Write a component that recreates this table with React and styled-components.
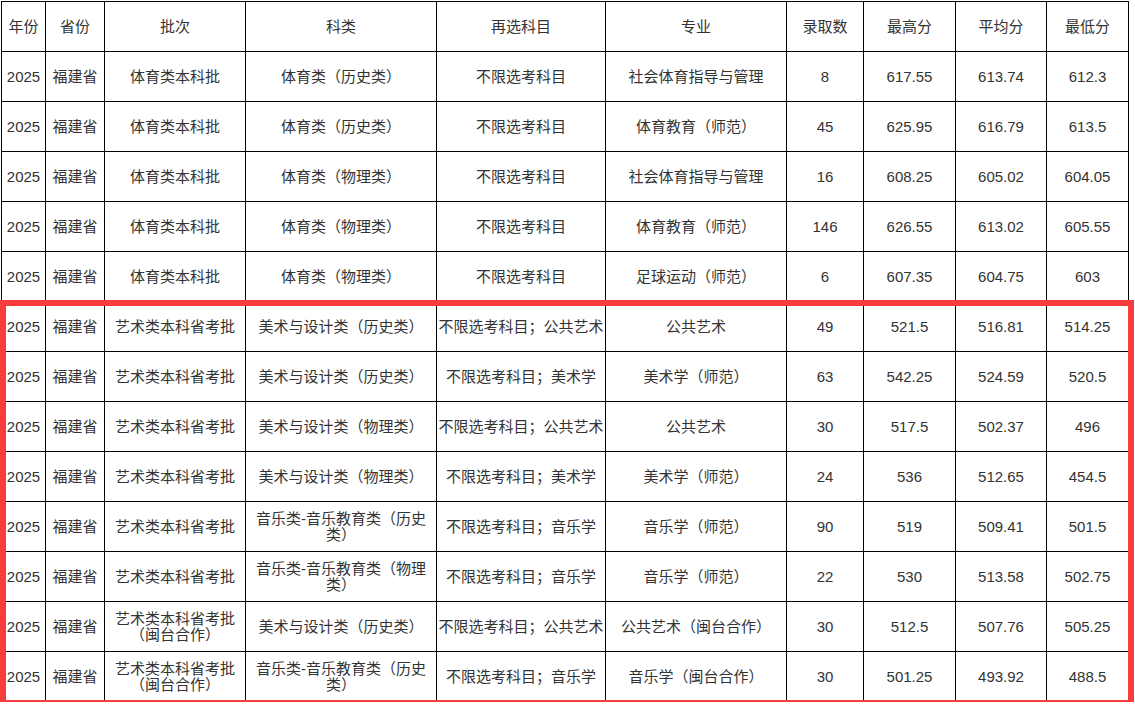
import React from "react";
import styled, { createGlobalStyle } from "styled-components";

const GlobalStyle = createGlobalStyle`
  html, body {
    margin: 0;
    padding: 0;
    background: #fff;
  }
`;

const Page = styled.div`
  position: relative;
  padding: 1px 0 0 1px;
  font-family: "Liberation Sans", "Noto Sans CJK SC", sans-serif;
  font-size: 15px;
  color: #333;
`;

const Table = styled.table`
  width: 1128px;
  border-collapse: collapse;
  table-layout: fixed;
`;

const Row = styled.tr`
  height: 50px;
`;

const Cell = styled.td`
  border: 1px solid #000;
  padding: 0 1px;
  text-align: center;
  vertical-align: middle;
  line-height: 16px;
  font-weight: normal;
`;

const HeadCell = styled(Cell).attrs({ as: "th" })``;

const Highlight = styled.div`
  position: absolute;
  left: 0;
  top: ${(p) => p.$top}px;
  width: 1134px;
  height: ${(p) => p.$height}px;
  box-sizing: border-box;
  border: 6px solid #f73c3c;
  pointer-events: none;
`;

const widths = [44, 59, 141, 191, 169, 181, 77, 92, 91, 82];

const headers = ["年份", "省份", "批次", "科类", "再选科目", "专业", "录取数", "最高分", "平均分", "最低分"];

const rows = [
  ["体育类本科批", "体育类（历史类）", "不限选考科目", "社会体育指导与管理", "8", "617.55", "613.74", "612.3"],
  ["体育类本科批", "体育类（历史类）", "不限选考科目", "体育教育（师范）", "45", "625.95", "616.79", "613.5"],
  ["体育类本科批", "体育类（物理类）", "不限选考科目", "社会体育指导与管理", "16", "608.25", "605.02", "604.05"],
  ["体育类本科批", "体育类（物理类）", "不限选考科目", "体育教育（师范）", "146", "626.55", "613.02", "605.55"],
  ["体育类本科批", "体育类（物理类）", "不限选考科目", "足球运动（师范）", "6", "607.35", "604.75", "603"],
  ["艺术类本科省考批", "美术与设计类（历史类）", "不限选考科目；公共艺术", "公共艺术", "49", "521.5", "516.81", "514.25"],
  ["艺术类本科省考批", "美术与设计类（历史类）", "不限选考科目；美术学", "美术学（师范）", "63", "542.25", "524.59", "520.5"],
  ["艺术类本科省考批", "美术与设计类（物理类）", "不限选考科目；公共艺术", "公共艺术", "30", "517.5", "502.37", "496"],
  ["艺术类本科省考批", "美术与设计类（物理类）", "不限选考科目；美术学", "美术学（师范）", "24", "536", "512.65", "454.5"],
  ["艺术类本科省考批", "音乐类-音乐教育类（历史类）", "不限选考科目；音乐学", "音乐学（师范）", "90", "519", "509.41", "501.5"],
  ["艺术类本科省考批", "音乐类-音乐教育类（物理类）", "不限选考科目；音乐学", "音乐学（师范）", "22", "530", "513.58", "502.75"],
  ["艺术类本科省考批（闽台合作）", "美术与设计类（历史类）", "不限选考科目；公共艺术", "公共艺术（闽台合作）", "30", "512.5", "507.76", "505.25"],
  ["艺术类本科省考批（闽台合作）", "音乐类-音乐教育类（历史类）", "不限选考科目；音乐学", "音乐学（闽台合作）", "30", "501.25", "493.92", "488.5"],
];

export default function App() {
  return (
    <Page>
      <GlobalStyle />
      <Table>
        <colgroup>
          {widths.map((w, i) => (
            <col key={i} style={{ width: w }} />
          ))}
        </colgroup>
        <thead>
          <Row>
            {headers.map((h) => (
              <HeadCell key={h}>{h}</HeadCell>
            ))}
          </Row>
        </thead>
        <tbody>
          {rows.map((r, i) => (
            <Row key={i}>
              <Cell>2025</Cell>
              <Cell>福建省</Cell>
              {r.map((c, j) => (
                <Cell key={j}>{c}</Cell>
              ))}
            </Row>
          ))}
        </tbody>
      </Table>
      <Highlight $top={300} $height={406} />
    </Page>
  );
}
